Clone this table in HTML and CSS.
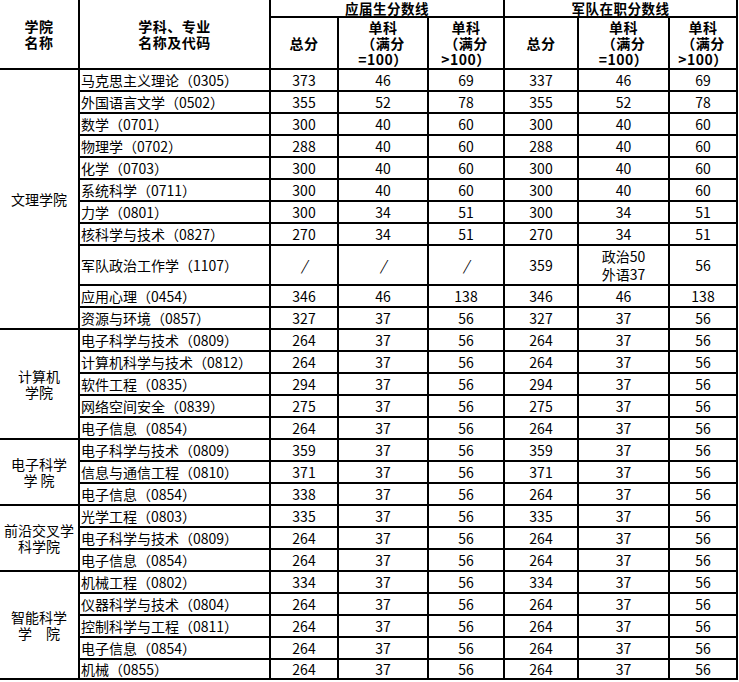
FILE: index.html
```html
<!DOCTYPE html>
<html lang="zh-CN">
<head>
<meta charset="utf-8">
<title>分数线</title>
<link rel="stylesheet" href="styles.css">
</head>
<body>
<div class="sheet">
  <div class="c h hx2">学院<br>名称</div>
  <div class="c h hx2">学科、专业<br>名称及代码</div>
  <div class="c h top span3">应届生分数线</div>
  <div class="c h top span3">军队在职分数线</div>
  <div class="c h">总分</div>
  <div class="c h">单科<br>（满分<br>=100）</div>
  <div class="c h">单科<br>（满分<br>&gt;100）</div>
  <div class="c h">总分</div>
  <div class="c h">单科<br>（满分<br>=100）</div>
  <div class="c h">单科<br>（满分<br>&gt;100）</div>

  <div class="c grp g11">文理学院</div>
  <div class="c name">马克思主义理论（0305）</div><div class="c">373</div><div class="c">46</div><div class="c">69</div><div class="c">337</div><div class="c">46</div><div class="c">69</div>
  <div class="c name">外国语言文学（0502）</div><div class="c">355</div><div class="c">52</div><div class="c">78</div><div class="c">355</div><div class="c">52</div><div class="c">78</div>
  <div class="c name">数学（0701）</div><div class="c">300</div><div class="c">40</div><div class="c">60</div><div class="c">300</div><div class="c">40</div><div class="c">60</div>
  <div class="c name">物理学（0702）</div><div class="c">288</div><div class="c">40</div><div class="c">60</div><div class="c">288</div><div class="c">40</div><div class="c">60</div>
  <div class="c name">化学（0703）</div><div class="c">300</div><div class="c">40</div><div class="c">60</div><div class="c">300</div><div class="c">40</div><div class="c">60</div>
  <div class="c name">系统科学（0711）</div><div class="c">300</div><div class="c">40</div><div class="c">60</div><div class="c">300</div><div class="c">40</div><div class="c">60</div>
  <div class="c name">力学（0801）</div><div class="c">300</div><div class="c">34</div><div class="c">51</div><div class="c">300</div><div class="c">34</div><div class="c">51</div>
  <div class="c name">核科学与技术（0827）</div><div class="c">270</div><div class="c">34</div><div class="c">51</div><div class="c">270</div><div class="c">34</div><div class="c">51</div>
  <div class="c name">军队政治工作学（1107）</div><div class="c slash">/</div><div class="c slash">/</div><div class="c slash">/</div><div class="c">359</div><div class="c two">政治50<br>外语37</div><div class="c">56</div>
  <div class="c name">应用心理（0454）</div><div class="c">346</div><div class="c">46</div><div class="c">138</div><div class="c">346</div><div class="c">46</div><div class="c">138</div>
  <div class="c name">资源与环境（0857）</div><div class="c">327</div><div class="c">37</div><div class="c">56</div><div class="c">327</div><div class="c">37</div><div class="c">56</div>

  <div class="c grp g5">计算机<br>学院</div>
  <div class="c name">电子科学与技术（0809）</div><div class="c">264</div><div class="c">37</div><div class="c">56</div><div class="c">264</div><div class="c">37</div><div class="c">56</div>
  <div class="c name">计算机科学与技术（0812）</div><div class="c">264</div><div class="c">37</div><div class="c">56</div><div class="c">264</div><div class="c">37</div><div class="c">56</div>
  <div class="c name">软件工程（0835）</div><div class="c">294</div><div class="c">37</div><div class="c">56</div><div class="c">294</div><div class="c">37</div><div class="c">56</div>
  <div class="c name">网络空间安全（0839）</div><div class="c">275</div><div class="c">37</div><div class="c">56</div><div class="c">275</div><div class="c">37</div><div class="c">56</div>
  <div class="c name">电子信息（0854）</div><div class="c">264</div><div class="c">37</div><div class="c">56</div><div class="c">264</div><div class="c">37</div><div class="c">56</div>

  <div class="c grp g3">电子科学<br>学&nbsp;院</div>
  <div class="c name">电子科学与技术（0809）</div><div class="c">359</div><div class="c">37</div><div class="c">56</div><div class="c">359</div><div class="c">37</div><div class="c">56</div>
  <div class="c name">信息与通信工程（0810）</div><div class="c">371</div><div class="c">37</div><div class="c">56</div><div class="c">371</div><div class="c">37</div><div class="c">56</div>
  <div class="c name">电子信息（0854）</div><div class="c">338</div><div class="c">37</div><div class="c">56</div><div class="c">264</div><div class="c">37</div><div class="c">56</div>

  <div class="c grp g3">前沿交叉学<br>科学院</div>
  <div class="c name">光学工程（0803）</div><div class="c">335</div><div class="c">37</div><div class="c">56</div><div class="c">335</div><div class="c">37</div><div class="c">56</div>
  <div class="c name">电子科学与技术（0809）</div><div class="c">264</div><div class="c">37</div><div class="c">56</div><div class="c">264</div><div class="c">37</div><div class="c">56</div>
  <div class="c name">电子信息（0854）</div><div class="c">264</div><div class="c">37</div><div class="c">56</div><div class="c">264</div><div class="c">37</div><div class="c">56</div>

  <div class="c grp g5">智能科学<br>学　院</div>
  <div class="c name">机械工程（0802）</div><div class="c">334</div><div class="c">37</div><div class="c">56</div><div class="c">334</div><div class="c">37</div><div class="c">56</div>
  <div class="c name">仪器科学与技术（0804）</div><div class="c">264</div><div class="c">37</div><div class="c">56</div><div class="c">264</div><div class="c">37</div><div class="c">56</div>
  <div class="c name">控制科学与工程（0811）</div><div class="c">264</div><div class="c">37</div><div class="c">56</div><div class="c">264</div><div class="c">37</div><div class="c">56</div>
  <div class="c name">电子信息（0854）</div><div class="c">264</div><div class="c">37</div><div class="c">56</div><div class="c">264</div><div class="c">37</div><div class="c">56</div>
  <div class="c name">机械（0855）</div><div class="c">264</div><div class="c">37</div><div class="c">56</div><div class="c">264</div><div class="c">37</div><div class="c">56</div>
</div>
</body>
</html>
```
FILE: styles.css
```css
html, body {
  margin: 0;
  padding: 0;
  background: #fff;
}

body {
  font-family: "Noto Sans CJK SC", "Noto Sans", sans-serif;
  font-size: 14px;
  color: #000;
}

.sheet {
  display: inline-grid;
  grid-template-columns: 78px 189px 66px 88px 74px 72px 89px 66px;
  grid-template-rows: 16px 50px repeat(8, 20px) 38px repeat(17, 20px) 18px;
  gap: 2px;
  padding: 0 2px 2px 0;
  background: #000;
}

.c {
  background: #fff;
  display: flex;
  align-items: center;
  justify-content: center;
  text-align: center;
  line-height: 16px;
  white-space: nowrap;
}

.h {
  font-weight: 700;
  line-height: 16px;
  letter-spacing: 0.5px;
}

.top {
  line-height: 14px;
  font-size: 13.5px;
}

.hx2 {
  grid-row: span 2;
}

.span3 {
  grid-column: span 3;
}

.name {
  justify-content: flex-start;
  text-align: left;
  padding-left: 1px;
}

.grp {
  line-height: 16px;
}

.g11 { grid-row: span 11; }
.g5 { grid-row: span 5; }
.g3 { grid-row: span 3; }

.two {
  line-height: 18px;
}

.slash {
  font-style: italic;
}
```
